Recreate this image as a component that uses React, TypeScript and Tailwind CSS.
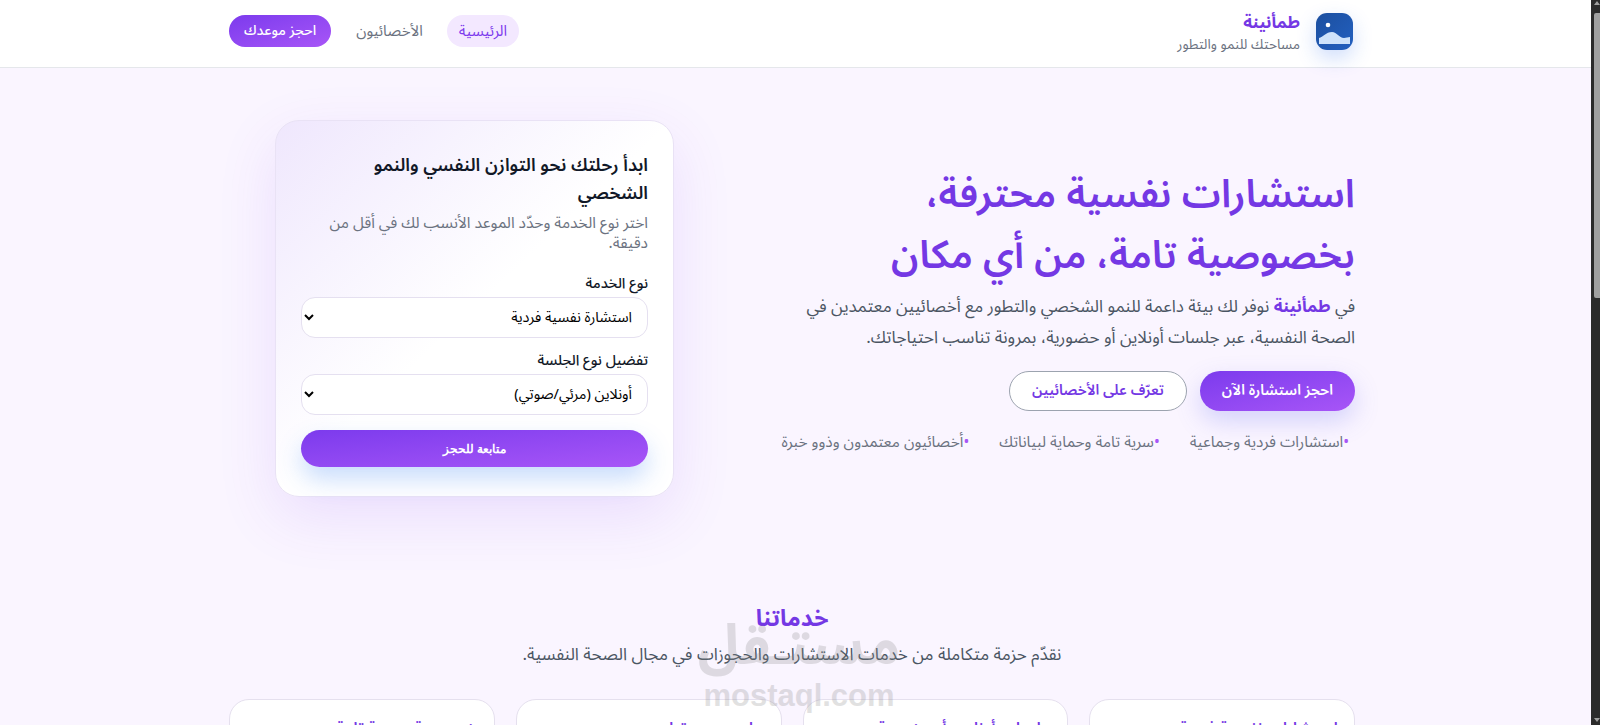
const SERVICES = [
  "استشارات نفسية فردية",
  "جلسات أونلاين أو حضورية",
  "برامج دعم وتطوير",
  "خصوصية وسرية تامة",
];

const POINTS = ["استشارات فردية وجماعية", "سرية تامة وحماية لبياناتك", "أخصائيون معتمدون وذوو خبرة"];

function Logo() {
  return (
    <svg viewBox="0 0 37 37" className="mr-[2px] h-[37px] w-[37px] rounded-[11px] shadow-[0_8px_20px_rgba(37,99,235,0.22)]">
      <defs>
        <linearGradient id="logo-bg" x1="0" y1="0" x2="1" y2="1">
          <stop offset="0" stopColor="#1c4f9f" />
          <stop offset="1" stopColor="#2360c0" />
        </linearGradient>
      </defs>
      <rect width="37" height="37" fill="url(#logo-bg)" />
      <path d="M3 31V25C7 24 10 19 16 19C21 19 23 25 28 25C30 25 32 24 34 24V31Z" fill="#cfe3fb" />
      <circle cx="12" cy="12" r="2.3" fill="#fff" />
    </svg>
  );
}

function Field({ label, value }: { label: string; value: string }) {
  return (
    <div className="mb-[12px]">
      <label className="mb-[2px] block text-[14.5px] font-medium leading-[22px] text-[#111827]">{label}</label>
      <select
        defaultValue={value}
        className="h-[41px] w-full rounded-[14px] border border-[#e5e0f0] bg-white pr-[11px] pl-[1px] text-[14.5px] text-black"
      >
        <option>{value}</option>
      </select>
    </div>
  );
}

export default function App() {
  return (
    <div className="flex h-[725px] overflow-hidden">
      <div
        dir="rtl"
        className="relative min-w-0 flex-1 overflow-hidden bg-[#faf5ff] font-['Noto_Sans_Arabic','Noto_Sans','DejaVu_Sans',sans-serif] text-[#111827]"
      >
        <header className="h-[68px] border-b border-[#e5e7eb] bg-white">
          <div className="mr-[236px] flex h-[67px] w-[1126px] items-center justify-between">
            <div className="flex items-center gap-[16px] pb-[4px]">
              <Logo />
              <div className="pt-[2px]">
                <div className="text-[17px] font-bold leading-[24px] text-[#7438e4]">طمأنينة</div>
                <div className="text-[13.8px] leading-[20px] text-[#6b7280]">مساحتك للنمو والتطور</div>
              </div>
            </div>
            <nav className="flex items-center gap-[12px] pb-[5px] text-[15px]">
              <a className="rounded-full bg-[#f3e8ff] px-[12px] py-[5px] leading-[22px] text-[#7c3aed]">الرئيسية</a>
              <a className="px-[12px] py-[5px] leading-[22px] text-[#6b7280]">الأخصائيون</a>
              <a className="mr-[1px] rounded-full bg-gradient-to-br from-[#7c3aed] to-[#a855f7] px-[15px] py-[5px] text-[14px] font-medium leading-[22px] text-white">
                احجز موعدك
              </a>
            </nav>
          </div>
        </header>

        <main className="mr-[236px] w-[1126px]">
          <section className="flex justify-between pt-[52px]">
            <div className="w-[565px] pt-[44px]">
              <h1 className="text-[39px] font-semibold leading-[61px] text-[#7438e4]">
                استشارات نفسية محترفة،
                <br />
                بخصوصية تامة، من أي مكان
              </h1>
              <p className="mt-[6px] text-[17px] leading-[31px] text-[#4b5563]">
                في <strong className="font-bold text-[#7438e4]">طمأنينة</strong> نوفر لك بيئة داعمة للنمو الشخصي والتطور مع أخصائيين معتمدين في الصحة النفسية، عبر جلسات أونلاين أو حضورية، بمرونة تناسب احتياجاتك.
              </p>
              <div className="mt-[17px] flex gap-[13px]">
                <button className="h-[40px] rounded-full bg-gradient-to-br from-[#7c3aed] to-[#a855f7] px-[22px] text-[14.5px] font-semibold text-white shadow-[0_10px_25px_rgba(99,102,241,0.25)]">
                  احجز استشارة الآن
                </button>
                <button className="h-[40px] rounded-full border border-[#9ca3af] bg-white px-[22px] text-[14.5px] font-semibold text-[#7438e4]">
                  تعرّف على الأخصائيين
                </button>
              </div>
              <ul className="mt-[20px] flex gap-[30px] pr-[6px] text-[15.4px] leading-[22px] text-[#6b7280]">
                {POINTS.map((point) => (
                  <li key={point} className="shrink-0">
                    <span className="text-[#a855f7]">•</span>
                    {point}
                  </li>
                ))}
              </ul>
            </div>

            <div className="ml-[46px] h-[377px] w-[399px] rounded-[24px] border border-[#e9e2f5] bg-gradient-to-tl from-white from-50% to-[#efe7fd] px-[25px] pt-[30px] shadow-[0_20px_60px_rgba(124,58,237,0.12)]">
              <h2 className="text-[18px] font-semibold leading-[28px] text-[#111827]">
                ابدأ رحلتك نحو التوازن النفسي والنمو الشخصي
              </h2>
              <p className="mt-[6px] mb-[20px] text-[15.5px] leading-[20px] text-[#6b7280]">
                اختر نوع الخدمة وحدّد الموعد الأنسب لك في أقل من دقيقة.
              </p>
              <Field label="نوع الخدمة" value="استشارة نفسية فردية" />
              <Field label="تفضيل نوع الجلسة" value="أونلاين (مرئي/صوتي)" />
              <button className="mt-[3px] h-[37px] w-full rounded-full bg-gradient-to-br from-[#7c3aed] to-[#a855f7] font-['Liberation_Sans',sans-serif] text-[12px] font-bold text-white shadow-[0_12px_25px_rgba(59,130,246,0.28)]">
                متابعة للحجز
              </button>
            </div>
          </section>

          <section className="pt-[105px] text-center">
            <h2 className="text-[23px] font-bold leading-[34px] text-[#7438e4]">خدماتنا</h2>
            <p className="mt-[6px] text-[17px] leading-[26px] text-[#4b5563]">
              نقدّم حزمة متكاملة من خدمات الاستشارات والحجوزات في مجال الصحة النفسية.
            </p>
            <div className="mt-[31px] grid grid-cols-4 gap-[21px]">
              {SERVICES.map((service) => (
                <div key={service} className="h-[120px] rounded-[20px] border border-[#e5e0ee] bg-white px-[16px] pt-[17px] text-right">
                  <h3 className="text-[16px] font-semibold leading-[24px] text-[#7438e4]">{service}</h3>
                </div>
              ))}
            </div>
          </section>
        </main>

        <div className="pointer-events-none absolute top-[610px] left-[703px] flex w-[192px] flex-col items-center text-[#8a8a8a] opacity-25">
          <span className="text-[56px] font-bold leading-[72px]">مستـقل</span>
          <span dir="ltr" className="font-['Liberation_Sans',sans-serif] text-[31px] font-bold leading-[28px]">mostaql.com</span>
        </div>
      </div>
      <div className="flex w-[9px] shrink-0 flex-col justify-between bg-[#2b2b2b] pl-[3px]">
        <div>
          <svg viewBox="0 0 6 5" className="h-[5px] w-[6px] fill-[#a0a0a0]">
            <polygon points="3,1 6,5 0,5" />
          </svg>
          <div className="mt-[8px] h-[285px] rounded-tl-[2px] rounded-bl-[2px] bg-[#a0a0a0]" />
        </div>
        <svg viewBox="0 0 6 5" className="mb-[2px] h-[5px] w-[6px] fill-[#a0a0a0]">
          <polygon points="0,0 6,0 3,4" />
        </svg>
      </div>
    </div>
  );
}
